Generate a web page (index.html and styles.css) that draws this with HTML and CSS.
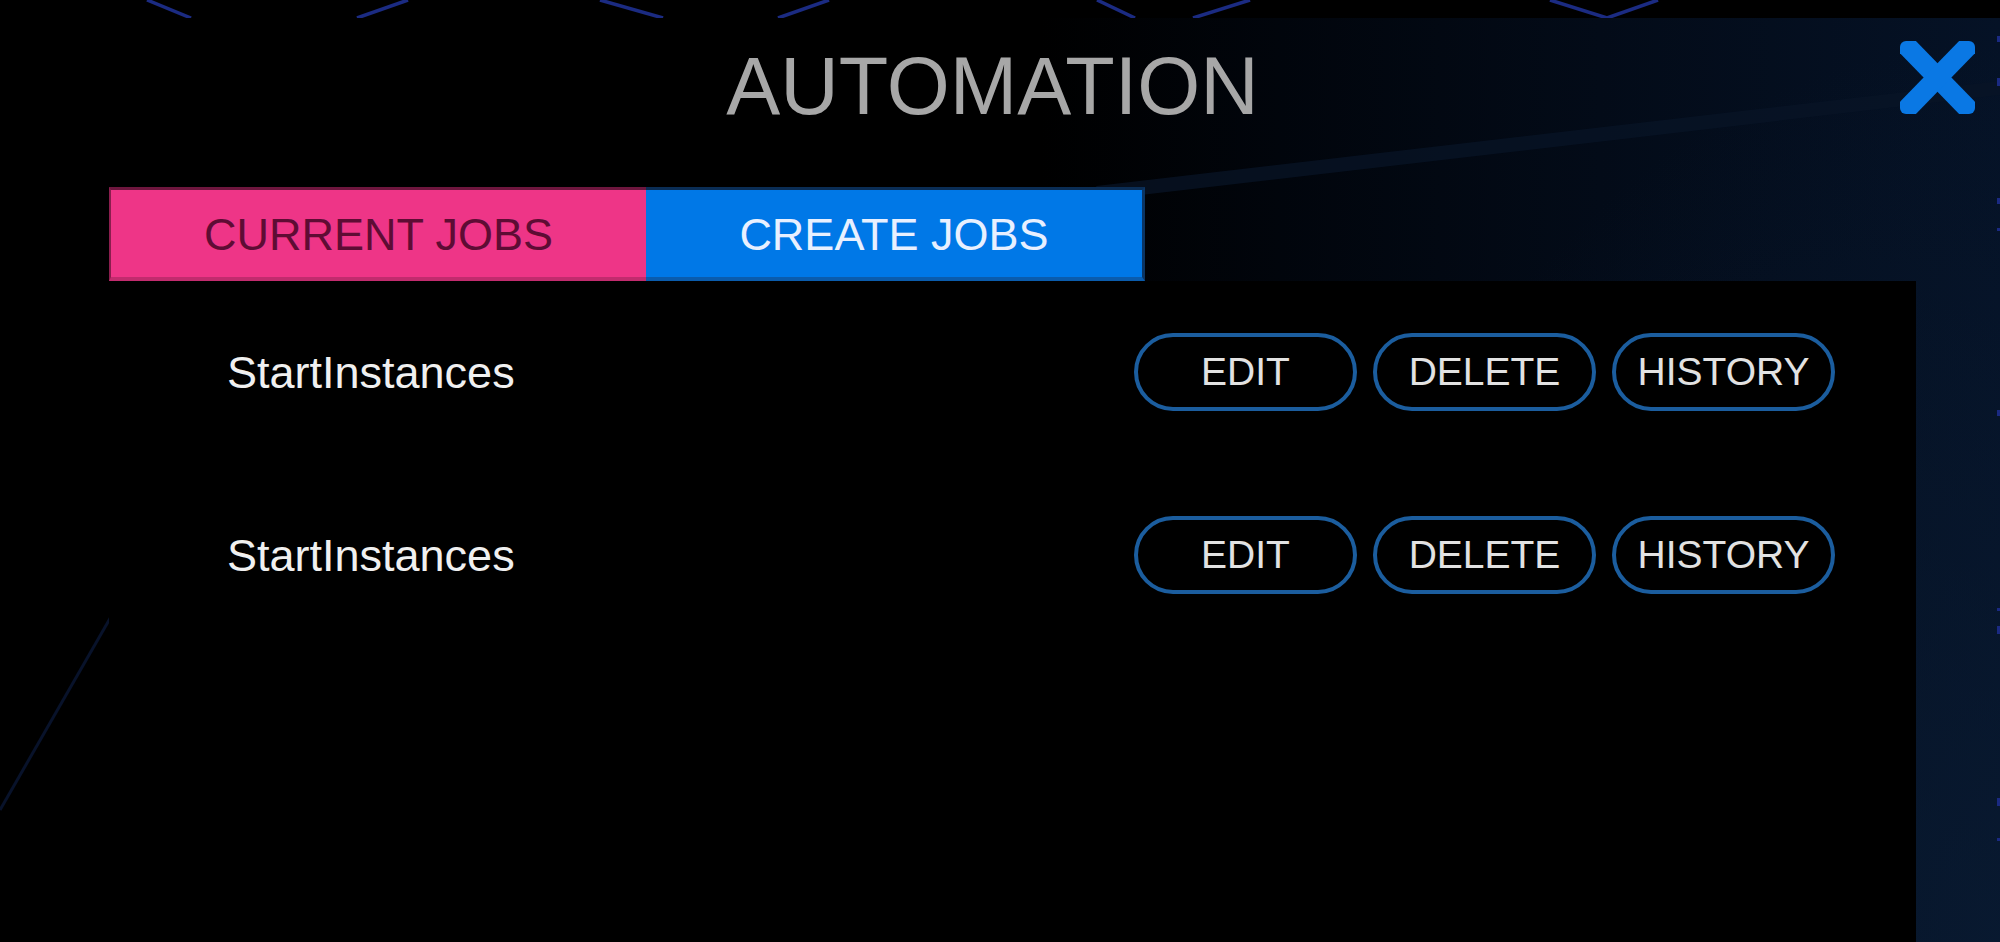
FILE: index.html
```html
<!DOCTYPE html>
<html lang="en">
<head>
<meta charset="utf-8">
<title>Automation</title>
<link rel="stylesheet" href="styles.css">
</head>
<body>
<div class="topstrip">
  <svg class="strip-art" width="2000" height="18" viewBox="0 0 2000 18">
    <g stroke="#1b2b82" stroke-width="3.5" fill="none">
      <line x1="147" y1="0" x2="191" y2="18"/>
      <line x1="408" y1="0" x2="357" y2="18"/>
      <line x1="600" y1="0" x2="663" y2="18"/>
      <line x1="829" y1="0" x2="778" y2="18"/>
      <line x1="1097" y1="0" x2="1135" y2="18"/>
      <line x1="1250" y1="0" x2="1193" y2="18"/>
      <line x1="1550" y1="0" x2="1607" y2="18"/>
      <line x1="1658" y1="0" x2="1607" y2="18"/>
    </g>
  </svg>
</div>
<div class="modal">
  <svg class="modal-art" width="2000" height="924" viewBox="0 0 2000 924">
    <line x1="1097" y1="175" x2="2000" y2="70" stroke="#081426" stroke-width="14" opacity="0.75"/>
    <line x1="112" y1="597" x2="0" y2="792" stroke="#08122a" stroke-width="3"/>
    <g fill="#1a2a82">
      <rect x="1997" y="18" width="3" height="6"/>
      <rect x="1997" y="60" width="3" height="8"/>
      <rect x="1997" y="180" width="3" height="6"/>
      <rect x="1997" y="210" width="3" height="3"/>
      <rect x="1997" y="392" width="3" height="6"/>
      <rect x="1997" y="590" width="3" height="3"/>
      <rect x="1997" y="608" width="3" height="8"/>
      <rect x="1997" y="780" width="3" height="8"/>
      <rect x="1997" y="820" width="3" height="3"/>
    </g>
  </svg>
  <header class="header">
    <h1 class="title">AUTOMATION</h1>
    <button class="close" aria-label="Close">
      <svg width="75" height="73" viewBox="0 0 75 73">
        <g stroke="#0a78e4" stroke-width="20" stroke-linecap="butt">
          <line x1="0" y1="-2" x2="75" y2="75"/>
          <line x1="75" y1="-2" x2="0" y2="75"/>
        </g>
      </svg>
    </button>
  </header>
  <nav class="tabs">
    <div class="tab tab-current">CURRENT JOBS</div>
    <div class="tab tab-create">CREATE JOBS</div>
  </nav>
  <section class="panel">
    <div class="row">
      <span class="job-name">StartInstances</span>
      <div class="actions">
        <button class="pill">EDIT</button>
        <button class="pill">DELETE</button>
        <button class="pill">HISTORY</button>
      </div>
    </div>
    <div class="row">
      <span class="job-name">StartInstances</span>
      <div class="actions">
        <button class="pill">EDIT</button>
        <button class="pill">DELETE</button>
        <button class="pill">HISTORY</button>
      </div>
    </div>
  </section>
</div>
</body>
</html>
```

FILE: styles.css
```css
* { box-sizing: border-box; }

html, body {
  margin: 0;
  padding: 0;
}

body {
  width: 2000px;
  height: 942px;
  overflow: hidden;
  background: #000;
  font-family: "Liberation Sans", Arial, sans-serif;
}

.topstrip {
  height: 18px;
  background: #000;
  position: relative;
}

.strip-art {
  display: block;
}

.modal {
  position: relative;
  height: 924px;
  display: flex;
  flex-direction: column;
  background:
    radial-gradient(ellipse 700px 900px at 100% 100%, rgba(10,28,52,0.7) 0%, rgba(10,28,52,0) 100%),
    linear-gradient(90deg, #000 0%, #000 52%, #01050c 64%, #030b18 80%, #051226 100%);
}

.modal-art {
  position: absolute;
  left: 0;
  top: 0;
  pointer-events: none;
}

.header {
  position: relative;
  height: 169px;
  padding-top: 28px;
  padding-right: 15px;
  display: flex;
  justify-content: center;
  align-items: flex-start;
}

.title {
  margin: 0;
  font-size: 81px;
  line-height: 80px;
  font-weight: normal;
  color: #a7a7a7;
  letter-spacing: 0;
}

.close {
  position: absolute;
  left: 1900px;
  top: 23px;
  width: 75px;
  height: 73px;
  padding: 0;
  border: 0;
  background: none;
}

.close svg {
  display: block;
  border-radius: 6px;
}

.tabs {
  position: relative;
  display: flex;
  margin-left: 109px;
  height: 94px;
}

.tab {
  height: 94px;
  display: flex;
  align-items: center;
  justify-content: center;
  font-size: 45px;
  padding-top: 2px;
}

.tab-current {
  width: 537px;
  background: #ee3587;
  color: #5e0c34;
  border-top: 3px solid #6e163e;
  border-left: 2px solid #8a1e4e;
  border-bottom: 4px solid #c22b6e;
}

.tab-create {
  width: 499px;
  background: #0078e7;
  color: #e8f0ff;
  border-top: 3px solid #0a2d55;
  border-right: 3px solid #0a3564;
  border-bottom: 4px solid #0a5cad;
}

.panel {
  position: relative;
  margin-left: 109px;
  width: 1807px;
  flex: 1;
  background: #000;
  padding: 52px 81px 0 118px;
  display: flex;
  flex-direction: column;
  gap: 105px;
}

.row {
  display: flex;
  align-items: center;
  justify-content: space-between;
  height: 78px;
}

.job-name {
  font-size: 45px;
  color: #f0f0f0;
  padding-top: 1px;
}

.actions {
  display: flex;
  gap: 16px;
}

.pill {
  width: 223px;
  height: 78px;
  border: 4px solid #1b5d9e;
  border-radius: 40px;
  background: #000;
  color: #e2e2e2;
  font-family: "Liberation Sans", Arial, sans-serif;
  font-size: 39px;
  padding: 0;
  display: flex;
  align-items: center;
  justify-content: center;
}
```
